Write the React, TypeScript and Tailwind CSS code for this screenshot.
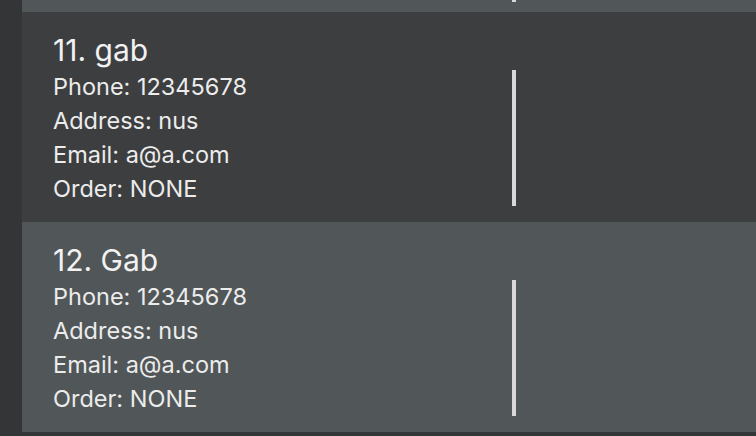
import React from "react";

type Person = { index: number; name: string; phone: string; address: string; email: string; order: string };

const people: Person[] = [
  { index: 11, name: "gab", phone: "12345678", address: "nus", email: "a@a.com", order: "NONE" },
  { index: 12, name: "Gab", phone: "12345678", address: "nus", email: "a@a.com", order: "NONE" },
];

const Card = ({ p, odd }: { p: Person; odd: boolean }) => (
  <div className={`h-[210px] pl-[31px] pt-[18px] ${odd ? "bg-[#3c3e40]" : "bg-[#515658]"}`}>
    <div className="text-[30px] leading-[40px] text-[#f2f2f2]">
      {p.index}. {p.name}
    </div>
    <div className="flex">
      <div className="w-[459px] text-[23.5px] leading-[34px] text-[#ececec]">
        <div>Phone: {p.phone}</div>
        <div>Address: {p.address}</div>
        <div>Email: {p.email}</div>
        <div>Order: {p.order}</div>
      </div>
      <div className="w-[4px] h-[136px] bg-[#d8d8d8]" />
    </div>
  </div>
);

export default function App() {
  return (
    <div
      className="w-[756px] h-[436px] overflow-hidden bg-[#333537] pl-[22px]"
      style={{ fontFamily: "Inter, 'Noto Sans', sans-serif" }}
    >
      <div className="h-[12px] bg-[#515658] pl-[490px]">
        <div className="w-[4px] h-[2px] bg-[#d8d8d8]" />
      </div>
      {people.map((p, i) => (
        <Card key={p.index} p={p} odd={i % 2 === 0} />
      ))}
    </div>
  );
}
